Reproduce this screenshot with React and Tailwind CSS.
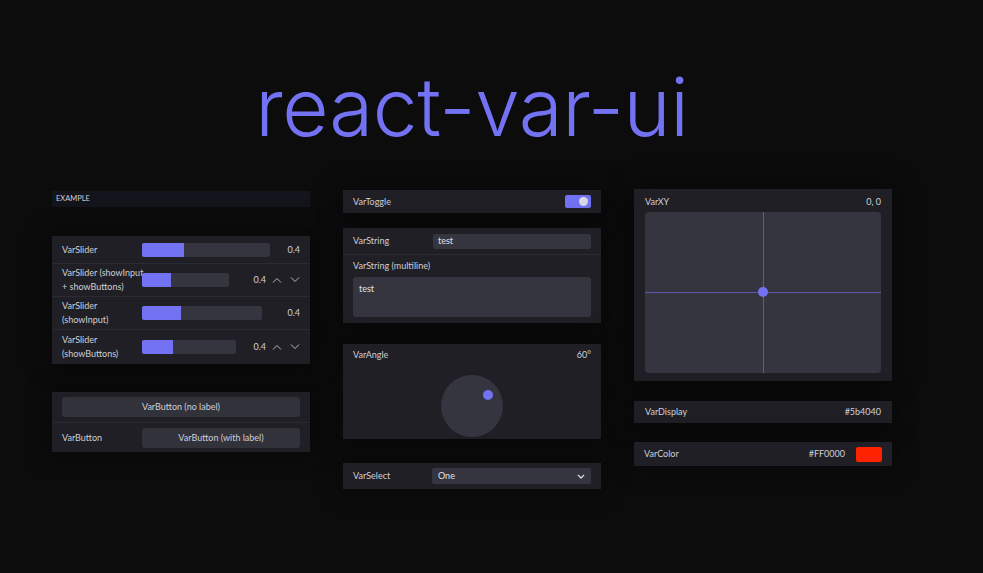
import React from 'react';

const ACCENT = 'bg-[#7372f3]';

function Panel({ className = '', children }) {
  return (
    <div className={`bg-[#1f1f25] shadow-[0_0_24px_rgba(0,0,0,0.55)] ${className}`}>
      {children}
    </div>
  );
}

function Chevron({ up }) {
  return (
    <svg width="10" height="6" viewBox="0 0 10 6" fill="none" stroke="#b8b8c2" strokeWidth="1">
      {up ? <path d="M1 5.5 L5 1.5 L9 5.5" /> : <path d="M1 0.5 L5 4.5 L9 0.5" />}
    </svg>
  );
}

function Slider({ width, fill }) {
  return (
    <div className="h-[14px] rounded-[2px] bg-[#35353f] overflow-hidden" style={{ width }}>
      <div className={`h-full ${ACCENT}`} style={{ width: fill }} />
    </div>
  );
}

function SliderRow({ label, width, fill, buttons, h, first }) {
  return (
    <div className={`flex items-center px-[10px] ${first ? '' : 'border-t border-[#2b2b33]'}`} style={{ height: h }}>
      <div className="w-[80px] leading-[14px] whitespace-nowrap">{label}</div>
      <Slider width={width} fill={fill} />
      <div className="flex-1 flex items-center justify-end gap-[8px]">
        <span className={buttons ? 'mr-[-2px]' : ''}>0.4</span>
        {buttons && (
          <>
            <Chevron up />
            <Chevron />
          </>
        )}
      </div>
    </div>
  );
}

export default function App() {
  return (
    <div
      className="min-h-[573px] w-full bg-[#0c0c0d] text-[#cfcfd8] text-[9px] overflow-hidden"
      style={{ fontFamily: 'Lato, "Noto Sans", sans-serif' }}
    >
      <div className="w-[840px] ml-[52px]">
        <h1
          className="text-center text-[80px] leading-none font-light text-[#7372f3] pt-[67px] h-[190px] tracking-[-0.3px]"
          style={{ fontFamily: 'Inter, "Noto Sans", sans-serif' }}
        >
          react-var-ui
        </h1>

        <div className="grid grid-cols-3 gap-x-[33px] items-start">
          {/* column 1 */}
          <div className="flex flex-col pt-[1px]">
            <div className="h-[16px] bg-[#14141d] px-[4px] flex items-center text-[7.5px]">EXAMPLE</div>
            <Panel className="mt-[29px]">
              <SliderRow first label="VarSlider" width={128} fill={42} h={27} />
              <SliderRow label={<>VarSlider (showInput<br />+ showButtons)</>} width={87} fill={29} buttons h={33} />
              <SliderRow label={<>VarSlider<br />(showInput)</>} width={120} fill={39} h={33} />
              <SliderRow label={<>VarSlider<br />(showButtons)</>} width={94} fill={31} buttons h={35} />
            </Panel>
            <Panel className="mt-[28px]">
              <div className="h-[30px] px-[10px] flex items-center">
                <div className="h-[20px] flex-1 rounded-[3px] bg-[#32323b] flex items-center justify-center">VarButton (no label)</div>
              </div>
              <div className="h-[30px] px-[10px] flex items-center border-t border-[#2b2b33]">
                <div className="w-[80px]">VarButton</div>
                <div className="h-[20px] flex-1 rounded-[3px] bg-[#32323b] flex items-center justify-center">VarButton (with label)</div>
              </div>
            </Panel>
          </div>

          {/* column 2 */}
          <div className="flex flex-col">
            <Panel className="h-[23px] px-[10px] flex items-center justify-between">
              <span>VarToggle</span>
              <div className={`w-[26px] h-[13px] rounded-[2px] ${ACCENT} flex items-center justify-end pr-[3px]`}>
                <div className="w-[9px] h-[9px] rounded-full bg-[#d9d9e6]" />
              </div>
            </Panel>
            <Panel className="mt-[15px]">
              <div className="h-[26px] px-[10px] flex items-center">
                <div className="w-[80px]">VarString</div>
                <div className="flex-1 h-[15px] rounded-[2px] bg-[#35353f] px-[5px] flex items-center text-[#e2e2ea]">test</div>
              </div>
              <div className="border-t border-[#2b2b33] px-[10px] pt-[5px] pb-[6px]">
                <div className="leading-[12px]">VarString (multiline)</div>
                <div className="mt-[5px] h-[40px] rounded-[3px] bg-[#35353f] px-[6px] pt-[5px] text-[#e2e2ea]">test</div>
              </div>
            </Panel>
            <Panel className="mt-[21px] h-[95px] px-[10px] pt-[5px]">
              <div className="flex justify-between leading-[12px]">
                <span>VarAngle</span>
                <span>60°</span>
              </div>
              <div className="flex justify-center mt-[14px]">
                <div className="relative w-[62px] h-[62px] rounded-full bg-[#35353f]">
                  <div className={`absolute w-[10px] h-[10px] rounded-full ${ACCENT} left-[42px] top-[15px]`} />
                </div>
              </div>
            </Panel>
            <Panel className="mt-[24px] h-[26px] px-[10px] flex items-center">
              <div className="w-[79px]">VarSelect</div>
              <div className="flex-1 h-[16px] rounded-[2px] bg-[#35353f] px-[6px] flex items-center justify-between text-[#e2e2ea]">
                <span>One</span>
                <svg width="8" height="5" viewBox="0 0 8 5" fill="none" stroke="#d6d6e0" strokeWidth="1.3">
                  <path d="M1 1 L4 4 L7 1" />
                </svg>
              </div>
            </Panel>
          </div>

          {/* column 3 */}
          <div className="flex flex-col mt-[-1px]">
            <Panel className="h-[192px] px-[11px] pt-[7px]">
              <div className="flex justify-between leading-[12px]">
                <span>VarXY</span>
                <span>0, 0</span>
              </div>
              <div className="relative mt-[4px] h-[161px] rounded-[4px] bg-[#35353f]">
                <div className="absolute left-[118px] top-0 bottom-0 w-px bg-[#5b5aa8]" />
                <div className="absolute top-[80px] left-0 right-0 h-px bg-[#5b5aa8]" />
                <div className={`absolute w-[10px] h-[10px] rounded-full ${ACCENT} left-[113px] top-[75px]`} />
              </div>
            </Panel>
            <Panel className="mt-[20px] h-[22px] px-[11px] flex items-center justify-between">
              <span>VarDisplay</span>
              <span>#5b4040</span>
            </Panel>
            <Panel className="mt-[19px] h-[24px] px-[10px] flex items-center justify-between">
              <span>VarColor</span>
              <div className="flex items-center gap-[11px]">
                <span>#FF0000</span>
                <div className="w-[26px] h-[15px] rounded-[2px] bg-[#ff2200]" />
              </div>
            </Panel>
          </div>
        </div>
      </div>
    </div>
  );
}
